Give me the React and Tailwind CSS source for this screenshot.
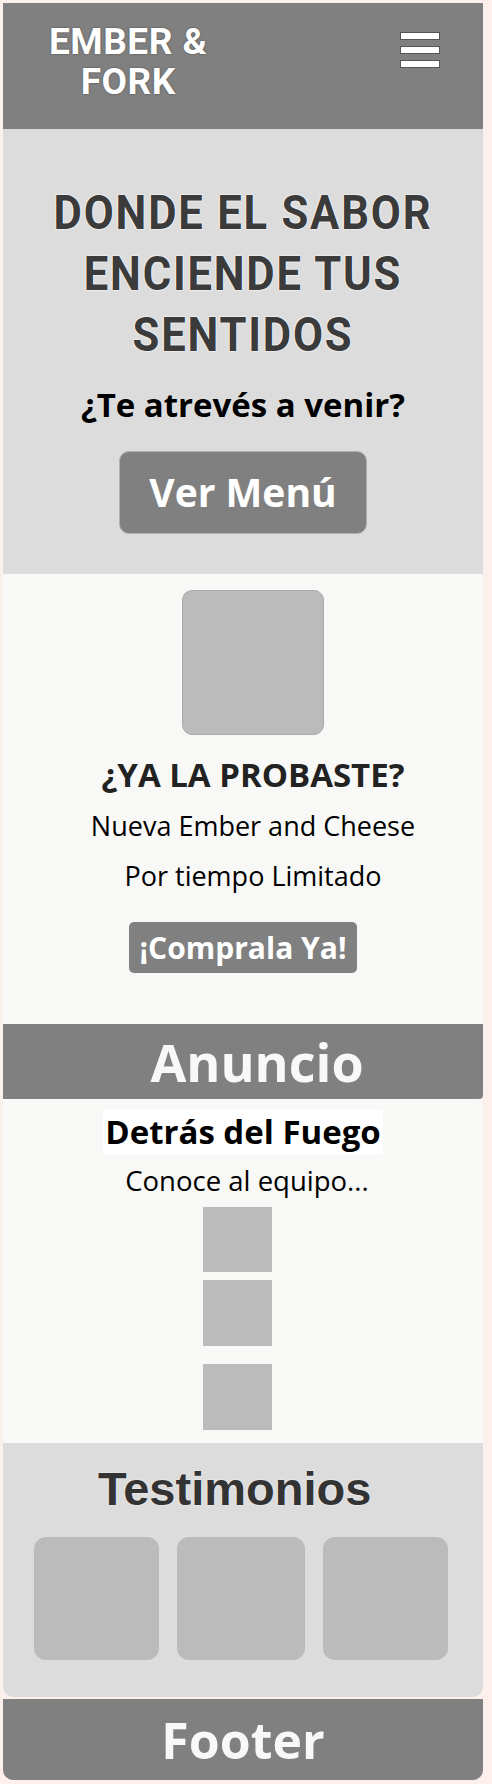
export default function App() {
  const body = { fontFamily: '"Open Sans", "Noto Sans", sans-serif' };

  return (
    <div className="min-h-[1784px] bg-[#fdf0ec] pt-[3px]" style={body}>
      <div className="ml-[3px] w-[480px]">
        {/* header */}
        <header className="flex h-[126px] items-start justify-between bg-[#808080] pl-[46px] pr-[43px]">
          <div
            className="mt-[19px] text-center text-[37px] font-bold leading-[40px] tracking-[0.5px] text-white [text-shadow:0_0_2px_#444]"
            style={{ fontFamily: 'Roboto, "Liberation Sans", sans-serif' }}
          >
            EMBER &amp;
            <br />
            FORK
          </div>
          <div className="mt-[29px] flex w-[40px] flex-col gap-[6px]">
            <span className="h-[8px] border border-[#555] bg-white" />
            <span className="h-[8px] border border-[#555] bg-white" />
            <span className="h-[8px] border border-[#555] bg-white" />
          </div>
        </header>

        {/* hero */}
        <section className="flex h-[445px] flex-col items-center bg-[#dcdcdc] pt-[53px]">
          <h1
            className="w-full scale-x-[0.89] text-center text-[49px] font-bold uppercase leading-[61px] tracking-[2px] text-[#3b3b3b] [text-shadow:0_0_2px_#fff,0_0_2px_#fff]"
            style={{ fontFamily: 'Roboto, "Liberation Sans", sans-serif' }}
          >
            Donde el sabor
            <br />
            enciende tus
            <br />
            sentidos
          </h1>
          <p className="mt-[18px] text-[33px] font-bold leading-[44px] text-black">¿Te atrevés a venir?</p>
          <button
            type="button"
            className="mt-[24px] h-[83px] w-[248px] rounded-[10px] border border-[#b0b0b0] bg-[#808080] text-[39px] font-bold text-white"
          >
            Ver Menú
          </button>
        </section>

        {/* promo */}
        <section className="flex h-[450px] flex-col items-center bg-[#f8f8f6] pt-[16px]">
          <div className="flex flex-col items-center pl-[20px]">
            <div className="h-[145px] w-[142px] rounded-[10px] border border-[#aaa] bg-[#bbbbbb]" />
            <h2 className="mt-[18px] text-[33px] font-bold leading-[44px] text-[#222]">¿YA LA PROBASTE?</h2>
            <p className="mt-[4px] text-[27px] leading-[50px] text-black">Nueva Ember and Cheese</p>
            <p className="text-[27px] leading-[50px] text-black">Por tiempo Limitado</p>
          </div>
          <button
            type="button"
            className="mt-[21px] h-[51px] w-[228px] rounded-[5px] bg-[#808080] text-[30px] font-bold text-white"
          >
            ¡Comprala Ya!
          </button>
        </section>

        {/* anuncio */}
        <div className="flex h-[75px] items-center justify-center rounded-br-[4px] bg-[#808080] pl-[28px]">
          <span className="text-[52px] font-bold leading-none text-[#f8f8f8]">Anuncio</span>
        </div>

        {/* equipo */}
        <section className="flex h-[344px] flex-col items-center bg-[#f8f8f6] pt-[11px]">
          <h2 className="bg-white px-[2px] text-[33px] font-bold leading-[44px] text-black">Detrás del Fuego</h2>
          <p className="mt-[9px] pl-[8px] text-[27.5px] leading-[36px] text-black">Conoce al equipo...</p>
          <div className="mt-[8px] flex flex-col items-center pr-[12px]">
            <div className="h-[65px] w-[69px] bg-[#bbbbbb]" />
            <div className="mt-[8px] h-[66px] w-[69px] bg-[#bbbbbb]" />
            <div className="mt-[18px] h-[66px] w-[69px] bg-[#bbbbbb]" />
          </div>
        </section>

        {/* testimonios */}
        <section className="flex h-[254px] flex-col rounded-b-[10px] bg-[#dcdcdc] pt-[18px]">
          <h2
            className="pl-[95px] text-[47px] font-bold leading-[56px] text-[#333] [text-shadow:0_0_2px_#fff]"
            style={{ fontFamily: '"Liberation Sans", Arial, sans-serif' }}
          >
            Testimonios
          </h2>
          <div className="mt-[20px] flex gap-[18px] pl-[31px]">
            <div className="h-[123px] w-[125px] rounded-[12px] bg-[#bbbbbb]" />
            <div className="h-[123px] w-[128px] rounded-[12px] bg-[#bbbbbb]" />
            <div className="h-[123px] w-[125px] rounded-[12px] bg-[#bbbbbb]" />
          </div>
        </section>

        {/* footer */}
        <footer className="mt-[2px] flex h-[81px] items-center justify-center rounded-b-[10px] bg-[#808080]">
          <span className="text-[50px] font-bold leading-none text-[#f8f8f8]">Footer</span>
        </footer>
      </div>
    </div>
  );
}
